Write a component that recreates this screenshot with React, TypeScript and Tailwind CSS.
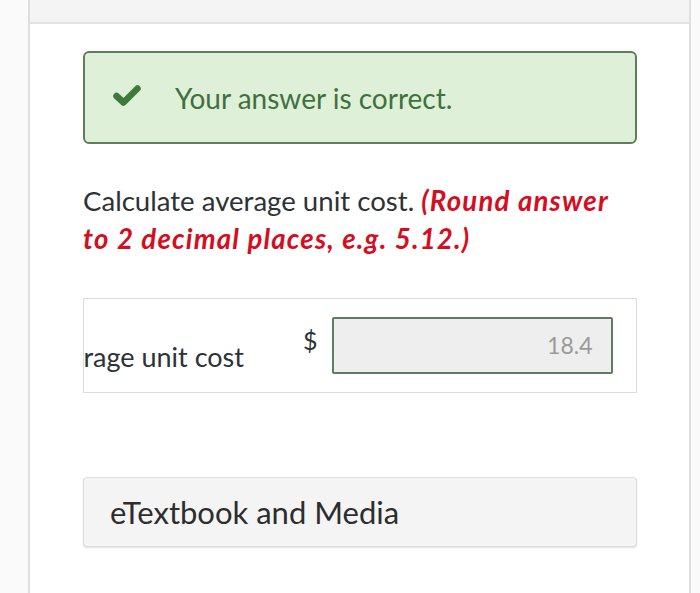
import React from "react";

export default function App() {
  return (
    <div
      className="flex h-[593px] w-[700px] overflow-hidden bg-[#fafafa]"
      style={{ fontFamily: "Lato, 'Open Sans', sans-serif" }}
    >
      <div className="w-[30px] shrink-0 border-r-2 border-[#dedede] bg-[#fafafa]" />
      <div className="flex w-[659px] shrink-0 flex-col bg-white">
        <div className="h-[24px] shrink-0 border-b-2 border-[#e2e2e2] bg-[#f4f4f4]" />
        <div className="flex flex-col pl-[53px] pr-[52px] pt-[27px]">
          <div className="flex h-[93px] items-center rounded-[6px] border-2 border-[#5e7d5c] bg-[#dff0d8] pl-[28px]">
            <svg width="28" height="24" viewBox="0 0 28 24" className="mt-[-4px]">
              <path
                d="M3.5 12 L10.5 18.5 L24.5 4.5"
                fill="none"
                stroke="#3f7a3c"
                strokeWidth="6.5"
                strokeLinecap="round"
                strokeLinejoin="round"
              />
            </svg>
            <span className="ml-[34px] text-[28px] leading-none text-[#3f7140]">
              Your answer is correct.
            </span>
          </div>

          <p className="mt-[38px] text-[27.6px] leading-[38px] text-[#2d3236]">
            Calculate average unit cost.{" "}
            <span className="font-bold italic tracking-[1.2px] text-[#d50d1e]">
              (Round answer
              <br />
              to 2 decimal places, e.g. 5.12.)
            </span>
          </p>

          <div className="mt-[40px] flex h-[95px] items-center border border-[#dcdcdc] bg-white">
            <div className="flex w-[160px] shrink-0 justify-end overflow-hidden whitespace-nowrap pt-[24px] text-[27px] text-[#2d3236]">
              <span>Average unit cost</span>
            </div>
            <span className="ml-[59px] mt-[-10px] text-[25px] text-[#2d3236]">$</span>
            <div className="ml-[14px] flex h-[57px] w-[281px] items-center justify-end rounded-[2px] border-2 border-[#5e7d5c] bg-[#eeeeee] pr-[18px] text-[23px] text-[#9a9a9a]">
              18.4
            </div>
          </div>

          <div className="mt-[84px] flex h-[70px] items-center rounded-[4px] border border-[#dcdcdc] bg-[#f4f4f4] pl-[26px] text-[31px] text-[#2d2d2d] shadow-[0_1px_2px_rgba(0,0,0,0.12)]">
            eTextbook and Media
          </div>
        </div>
      </div>
      <div className="w-[11px] shrink-0 border-l-2 border-[#dedede] bg-[#fafafa]" />
    </div>
  );
}
